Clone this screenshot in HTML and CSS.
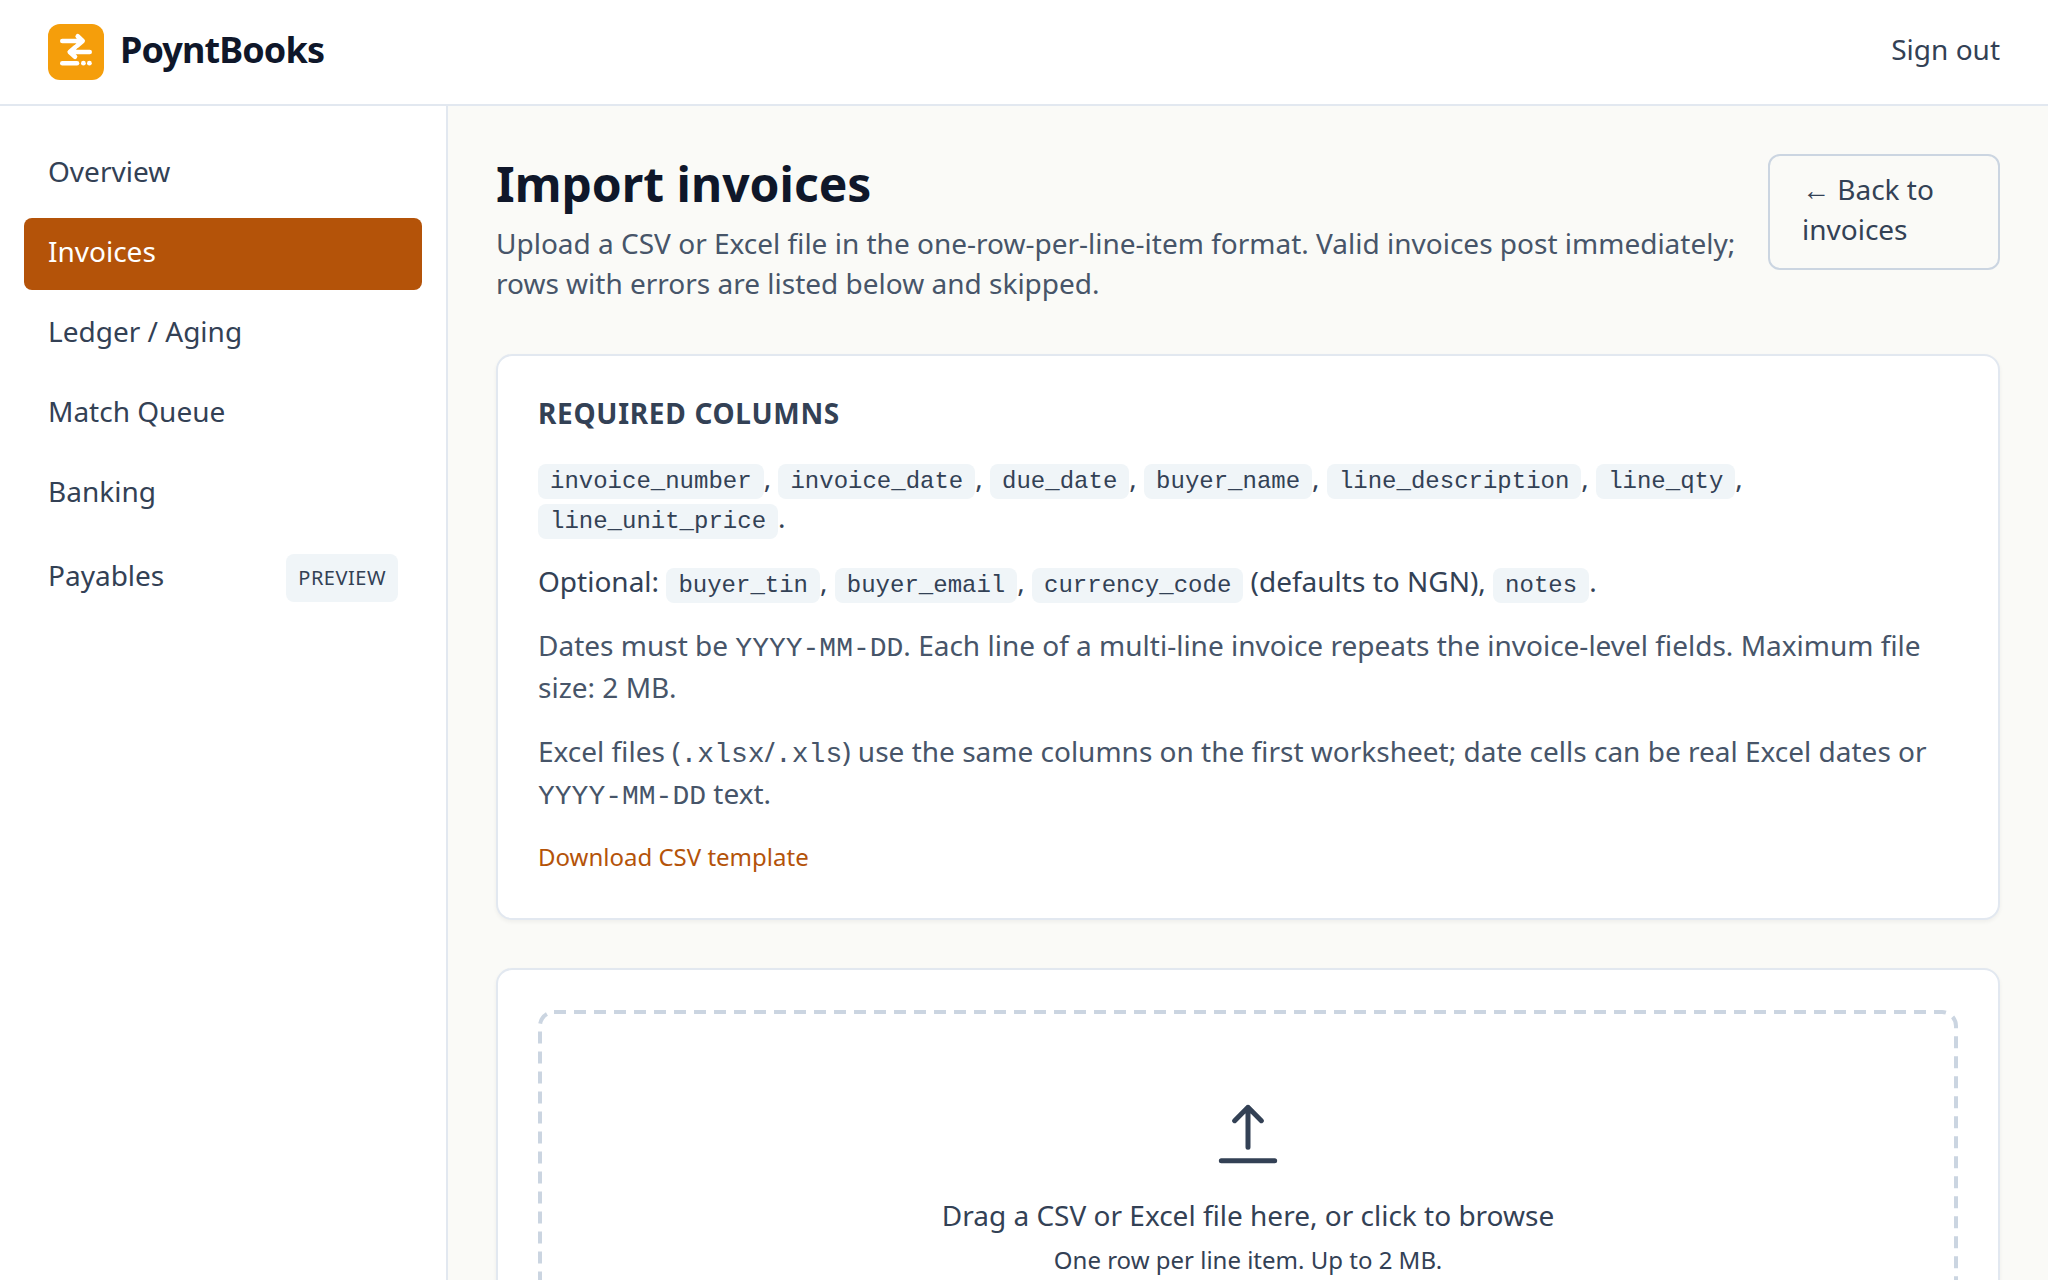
FILE: index.html
```html
<!DOCTYPE html>
<html lang="en">
<head>
  <meta charset="UTF-8">
  <meta name="viewport" content="width=device-width, initial-scale=1.0">
  <title>Import invoices - PoyntBooks</title>
  <link rel="stylesheet" href="styles.css">
</head>
<body>

  <header class="topbar">
    <a href="#" class="brand">
      <svg class="brand-logo" viewBox="0 0 56 56" aria-hidden="true">
        <rect width="56" height="56" rx="12" fill="#f59e0b"/>
        <g fill="none" stroke="#fff" stroke-width="4.6" stroke-linecap="round" stroke-linejoin="round">
          <path d="M14.3 17H34M29.7 12.3l5 4.7-5.6 4.7"/>
          <path d="M41.7 28H22M27.2 23.3l-5.5 4.7 5.3 4.8"/>
          <path d="M14.3 39.2H29"/>
        </g>
        <circle cx="35.4" cy="39.2" r="2.4" fill="#fff"/>
        <circle cx="41.4" cy="39.2" r="2.4" fill="#fff"/>
      </svg>
      <span class="brand-name">PoyntBooks</span>
    </a>
    <button type="button" class="sign-out label">Sign out</button>
  </header>

  <div class="layout">
    <nav class="sidebar">
      <a href="#" class="nav-item"><span class="label">Overview</span></a>
      <a href="#" class="nav-item active"><span class="label">Invoices</span></a>
      <a href="#" class="nav-item"><span class="label">Ledger / Aging</span></a>
      <a href="#" class="nav-item"><span class="label">Match Queue</span></a>
      <a href="#" class="nav-item"><span class="label">Banking</span></a>
      <a href="#" class="nav-item"><span class="label">Payables</span> <span class="badge">Preview</span></a>
    </nav>

    <main class="content">
      <div class="page-header">
        <div>
          <h1>Import invoices</h1>
          <p>Upload a CSV or Excel file in the one-row-per-line-item format. Valid invoices post immediately; rows with errors are listed below and skipped.</p>
        </div>
        <a href="#" class="back-link">← Back to invoices</a>
      </div>

      <section class="card columns">
        <h2>Required columns</h2>
        <p><code class="chip">invoice_number</code>, <code class="chip">invoice_date</code>, <code class="chip">due_date</code>, <code class="chip">buyer_name</code>, <code class="chip">line_description</code>, <code class="chip">line_qty</code>, <code class="chip">line_unit_price</code>.</p>
        <p>Optional: <code class="chip">buyer_tin</code>, <code class="chip">buyer_email</code>, <code class="chip">currency_code</code> (defaults to NGN), <code class="chip">notes</code>.</p>
        <p class="muted">Dates must be <code>YYYY-MM-DD</code>. Each line of a multi-line invoice repeats the invoice-level fields. Maximum file size: 2 MB.</p>
        <p class="muted">Excel files (<code>.xlsx</code>/<code>.xls</code>) use the same columns on the first worksheet; date cells can be real Excel dates or <code>YYYY-MM-DD</code> text.</p>
        <a href="#" class="template-link">Download CSV template</a>
      </section>

      <section class="card">
        <label class="dropzone" for="invoiceFile">
          <svg class="dropzone-border" aria-hidden="true"><rect x="2" y="2" rx="14"/></svg>
          <input type="file" id="invoiceFile" accept=".csv,.xlsx,.xls">
          <svg class="upload-icon" viewBox="0 0 24 24" fill="none" stroke="currentColor" stroke-width="1.5" stroke-linecap="round" stroke-linejoin="round" aria-hidden="true">
            <path d="M12 16V4m0 0L8 8m4-4l4 4M4 20h16"/>
          </svg>
          <span>Drag a CSV or Excel file here, or click to browse</span>
          <span class="hint">One row per line item. Up to 2 MB.</span>
        </label>
      </section>
    </main>
  </div>

</body>
</html>
```

FILE: styles.css
```css
* {
  margin: 0;
  padding: 0;
  box-sizing: border-box;
}

body {
  font-family: 'Noto Sans', sans-serif;
  font-size: 28px;
  line-height: 40px;
  background: #fafaf7;
  color: #334155;
  min-height: 100vh;
  display: flex;
  flex-direction: column;
}

a {
  color: inherit;
  text-decoration: none;
}

.topbar {
  display: flex;
  justify-content: space-between;
  align-items: center;
  padding: 24px 48px;
  background: #fff;
  border-bottom: 2px solid #e2e8f0;
}

.brand {
  display: flex;
  align-items: center;
  gap: 16px;
  font-size: 36px;
  line-height: 52px;
  font-weight: 700;
  letter-spacing: -0.025em;
  color: #0f172a;
}

.brand-logo {
  width: 56px;
  height: 56px;
}

.brand-name {
  padding-bottom: 4px;
}

.sign-out {
  font: inherit;
  color: inherit;
  background: none;
  border: none;
  cursor: pointer;
}

/* Single line labels sit a little above the middle of their row */
.label {
  line-height: 34px;
  padding-bottom: 6px;
}

.layout {
  display: flex;
  flex: 1;
}

/* Sidebar */
.sidebar {
  width: 448px;
  flex-shrink: 0;
  display: flex;
  flex-direction: column;
  gap: 8px;
  padding: 32px 24px;
  background: #fff;
  border-right: 2px solid #e2e8f0;
}

.nav-item {
  display: flex;
  justify-content: space-between;
  align-items: center;
  padding: 16px 24px;
  border-radius: 8px;
}

.nav-item.active {
  background: #b45309;
  color: #fff;
}

.badge {
  padding: 4px 12px;
  border-radius: 8px;
  background: #f0f5f8;
  font-size: 20px;
  text-transform: uppercase;
  letter-spacing: 0.025em;
}

/* Main column */
.content {
  flex: 1;
  min-width: 0;
  display: flex;
  flex-direction: column;
  gap: 48px;
  padding: 48px;
}

.page-header {
  display: flex;
  justify-content: space-between;
  align-items: flex-start;
  gap: 32px;
}

h1 {
  font-size: 48px;
  line-height: 60px;
  font-weight: 700;
  color: #0f172a;
}

.page-header p {
  padding: 9px 0 3px;
  color: #475569;
}

.back-link {
  padding: 13px 32px 19px;
  border: 2px solid #cbd5e1;
  border-radius: 12px;
}

.card {
  padding: 40px;
  background: #fff;
  border: 2px solid #e2e8f0;
  border-radius: 16px;
  box-shadow: 0 2px 4px rgba(0, 0, 0, 0.05);
}

.columns {
  display: flex;
  flex-direction: column;
  align-items: flex-start;
  gap: 24px;
  padding: 37px 40px 43px;
}

h2 {
  font-size: 28px;
  line-height: 40px;
  font-weight: 700;
  text-transform: uppercase;
  letter-spacing: 0.025em;
}

.muted {
  color: #475569;
}

code {
  font-family: 'Liberation Mono', monospace;
  font-size: 28px;
  line-height: 36px;
}

.chip {
  padding: 4px 12px;
  border-radius: 8px;
  background: #f0f5f8;
  font-size: 24px;
  line-height: 28px;
}

.template-link {
  font-size: 24px;
  line-height: 36px;
  color: #b45309;
}

/* Upload area */
.dropzone {
  position: relative;
  display: flex;
  flex-direction: column;
  align-items: center;
  padding: 84px;
  text-align: center;
  cursor: pointer;
}

.dropzone-border {
  position: absolute;
  inset: 0;
  width: 100%;
  height: 100%;
}

.dropzone-border rect {
  width: calc(100% - 4px);
  height: calc(100% - 4px);
  fill: none;
  stroke: #cbd5e1;
  stroke-width: 4px;
  stroke-dasharray: 12 8;
}

.dropzone input {
  position: absolute;
  width: 1px;
  height: 1px;
  opacity: 0;
}

.upload-icon {
  width: 80px;
  height: 80px;
  margin-bottom: 21px;
}

.hint {
  margin-top: 9px;
  font-size: 24px;
  line-height: 32px;
}
```
